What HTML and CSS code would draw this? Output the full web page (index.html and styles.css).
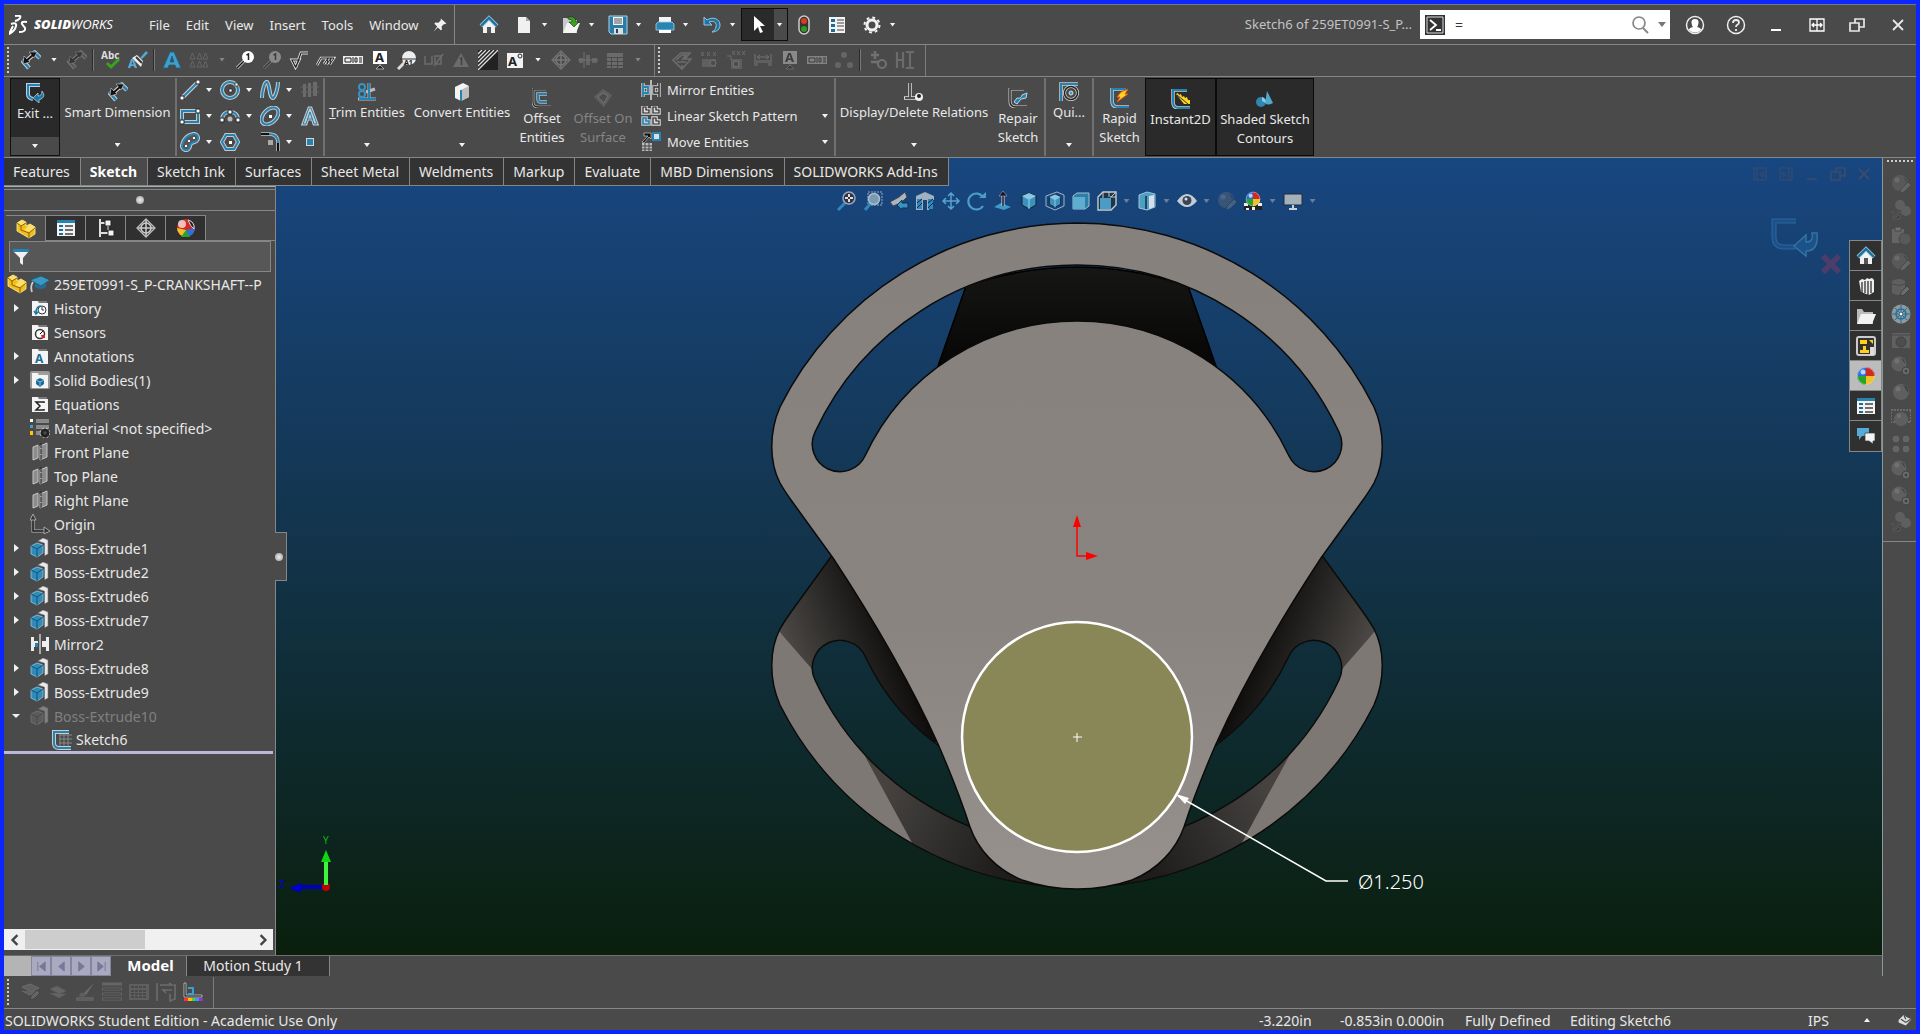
FILE: index.html
```html
<!DOCTYPE html>
<html lang="en">

<head>
    <meta charset="utf-8">
    <meta name="viewport" content="width=device-width, initial-scale=1.0">
    <title>SOLIDWORKS - Sketch6 of 259ET0991-S_P-CRANKSHAFT</title>
    <link rel="stylesheet" href="styles.css">
</head>

<body>
    <!-- icon sprite -->
    <svg class="sprite" aria-hidden="true">
        <symbol id="home" viewBox="0 0 20 20"><path d="M4 10v8h12v-8l-6-6z" fill="#f2f2f2"/><rect x="8" y="12" width="4" height="6" fill="#555"/><path d="M2 11l8-8 8 8" fill="none" stroke="#9ccbe2" stroke-width="4"/><path d="M2 11l8-8 8 8" fill="none" stroke="#1f7099" stroke-width="2.4"/></symbol>
        <symbol id="new" viewBox="0 0 20 20"><path d="M4 2h8l4 4v12H4z" fill="#f0f0f0"/><path d="M12 2v4h4z" fill="#a8a8a8"/></symbol>
        <symbol id="open" viewBox="0 0 20 20"><path d="M2 3h5l2 2h7v13H2z" fill="#c9c9c9"/><path d="M6 8h13l-4 10H2z" fill="#f4f4f4"/><path d="M7 2c5-1 8 1 8 5h3l-5 5-5-5h3c0-2-1-3-4-3z" fill="#36a51c" stroke="#222" stroke-width=".6"/></symbol>
        <symbol id="save" viewBox="0 0 20 20"><path d="M1 1h18v18H3l-2-2z" fill="#2a7ca8" stroke="#a5d1e6"/><path d="M5 2h10v8H5z" fill="#f3f3f3"/><path d="M6 4h8M6 6h8M6 8h8" stroke="#555"/><path d="M6 13h9v6H6z" fill="#ddd"/><path d="M8 14h2v4H8z" fill="#246"/></symbol>
        <symbol id="print" viewBox="0 0 20 20"><path d="M4 2h12v6H4zM4 13h12v4H4z" fill="#f4f4f4"/><path d="M1 9l2-2h14l2 2v6H1z" fill="#2a84b2" stroke="#a5d1e6" stroke-width=".8"/><path d="M4 15h12v3H4z" fill="#fff"/></symbol>
        <symbol id="undo" viewBox="0 0 20 20"><path d="M2 2v8h8L7 7c5-2 8 1 7 5-.3 2-2 4-4 5 5 0 8-3 8-7 0-6-7-9-13-5z" fill="#1f74a4" stroke="#94c6df"/></symbol>
        <symbol id="cursor" viewBox="0 0 20 20"><path d="M5 1v15l4-4 2 6 3-1-3-6h5z" fill="#fff"/></symbol>
        <symbol id="light" viewBox="0 0 20 20"><rect x="5" y="1" width="10" height="18" rx="5" fill="#333" stroke="#ccc" stroke-width="1.5"/><circle cx="10" cy="6" r="3" fill="#d93a20"/><circle cx="10" cy="14" r="3" fill="#2f9a1f"/></symbol>
        <symbol id="list" viewBox="0 0 20 20"><path d="M2 2h16v16H2z" fill="#f3f3f3"/><path d="M4 4h4v3H4zM4 9h4v3H4zM4 14h4v3H4z" fill="#1d6c98"/><path d="M10 5h7M10 8h7M10 11h7M10 15h7" stroke="#444"/></symbol>
        <symbol id="props" viewBox="0 0 20 20"><path d="M1 2h18v16H1z" fill="#f3f3f3"/><path d="M1 2h18v3H1z" fill="#2783b0"/><path d="M3 7h4v2H3zM3 11h4v2H3zM3 15h4v2H3z" fill="#1d6c98"/><path d="M9 8h8M9 12h8M9 16h8" stroke="#444" stroke-width="1.3"/></symbol>
        <symbol id="gear" viewBox="0 0 20 20"><circle cx="10" cy="10" r="5" fill="none" stroke="#f2f2f2" stroke-width="3"/><circle cx="10" cy="10" r="7.5" fill="none" stroke="#f2f2f2" stroke-width="2" stroke-dasharray="2.9 3"/></symbol>
        <symbol id="pin" viewBox="0 0 20 20"><path d="M11 2l7 6-2 1-1-.4-3 3.4.4 4-1.4.6-3.7-3.5L2 18l4.500-6L3 8.500 4 7l4 .2L11 4z" fill="#f0f0f0"/></symbol>
        <symbol id="dim" viewBox="0 0 20 20"><path d="M12 1l7 7M1 10l7 8" stroke="#ccc" stroke-width="4.500"/><path d="M12 1l7 7M1 10l7 8" stroke="#2583b4" stroke-width="2.500"/><path d="M4 12l9-8" stroke="#ddd" stroke-width="4"/><path d="M2 14l1-8 6 6zM16 2L8 2l5 6z" fill="#111" stroke="#ccc" stroke-width=".6"/><path d="M5 11l7-6" stroke="#111" stroke-width="2"/></symbol>
        <symbol id="spell" viewBox="0 0 20 20"><text x="0" y="9" font-size="10" font-weight="700" fill="#ddd">Abc</text><path d="M6 13l4 4 8-8" fill="none" stroke="#36a51c" stroke-width="3"/></symbol>
        <symbol id="brush" viewBox="0 0 20 20"><path d="M12 8l6-7 2 2-6 6z" fill="#55a5cc"/><path d="M4 8l5-3 6 6-2 6z" fill="#eee"/><path d="M8 7l6 6" stroke="#333" stroke-width="2"/><text x="0" y="18" font-size="13" font-weight="700" fill="#5ab0da">A</text></symbol>
        <symbol id="letter" viewBox="0 0 20 20"><path d="M1 18l7-16h4l7 16h-5l-1-3H7l-1 3zM8 12h4l-2-6z" fill="#3f9fcb" stroke="#1b5b7c" stroke-width=".7"/></symbol>
        <symbol id="letters" viewBox="0 0 20 20"><path d="M1 9l2.500-6L6 9zM8 9l2.500-6L13 9zM14 9l2.500-6L19 9zM1 17l2.500-6L6 17zM8 17l2.500-6L13 17zM14 17l2.500-6L19 17z" fill="none" stroke="#999"/></symbol>
        <symbol id="balloon" viewBox="0 0 20 20"><path d="M10 10l-8 8" stroke="#ddd" stroke-width="3"/><path d="M10 10l-8 8" stroke="#111" stroke-width="1.400"/><circle cx="13" cy="7" r="6" fill="#fff"/><path d="M11.500 5l2-1v6" fill="none" stroke="#222" stroke-width="1.500"/></symbol>
        <symbol id="surf" viewBox="0 0 20 20"><path d="M3 10h7l-3.500 7zM7 17l5-14h7" fill="none" stroke="#ddd" stroke-width="3"/><path d="M3 10h7l-3.500 7zM7 17l5-14h7" fill="none" stroke="#222" stroke-width="1.200"/></symbol>
        <symbol id="weld" viewBox="0 0 20 20"><path d="M1 15l4-7h13l-4 6 1-6-4 6 1-6-4 6" fill="none" stroke="#ddd" stroke-width="2.600"/><path d="M1 15l4-7h13l-4 6 1-6-4 6 1-6-4 6" fill="none" stroke="#222"/></symbol>
        <symbol id="gtol" viewBox="0 0 20 20"><path d="M0 6h20v8H0z" fill="#eee"/><path d="M2 8h6v4H2zM10 7v6M12 8h2v4h-2zM16 8h3M16 10h3M16 12h3" fill="none" stroke="#222"/></symbol>
        <symbol id="datum" viewBox="0 0 20 20"><path d="M3 1h14v13H3z" fill="#fff"/><text x="5" y="12" font-size="13" font-weight="700" fill="#222">A</text><path d="M10 14v2M6 19h8l-4-4z" fill="#222" stroke="#ccc" stroke-width=".7"/></symbol>
        <symbol id="dtarget" viewBox="0 0 20 20"><path d="M8 12l-7 7" stroke="#ddd" stroke-width="3"/><circle cx="12" cy="8" r="7" fill="#eee"/><path d="M3 9h17" stroke="#333"/><text x="7" y="15" font-size="7" font-weight="700" fill="#222">A1</text></symbol>
        <symbol id="hole" viewBox="0 0 20 20"><path d="M1 6v8h7V6M11 6l6 0v8h-6zM10 16l9-12" fill="none" stroke="#aaa" stroke-width="1.500"/></symbol>
        <symbol id="tri" viewBox="0 0 20 20"><path d="M10 3l8 14H2z" fill="#aaa"/><path d="M9 9l1.500-1v7" fill="none" stroke="#333" stroke-width="1.500"/></symbol>
        <symbol id="hatch" viewBox="0 0 20 20"><path d="M0 0h20v20H0z" fill="#222"/><path d="M0 4l4-4M0 8l8-8M0 12L12 0M0 16L16 0M0 20L20 0" stroke="#ddd" stroke-width="1.300"/></symbol>
        <symbol id="block" viewBox="0 0 20 20"><path d="M2 3h16v15H2z" fill="#f3f3f3"/><text x="3" y="16" font-size="13" font-weight="700" fill="#222">A</text><circle cx="15" cy="6" r="2" fill="none" stroke="#222"/></symbol>
        <symbol id="target" viewBox="0 0 20 20"><path d="M10 1l9 9-9 9-9-9z" fill="none" stroke="#bbb" stroke-width="1.300"/><circle cx="10" cy="10" r="5" fill="none" stroke="#ccc" stroke-width="1.600"/><path d="M10 2v16M2 10h16" stroke="#ccc" stroke-width="1.500"/></symbol>
        <symbol id="cline" viewBox="0 0 20 20"><path d="M1 8h4v5H1zM8 5h4v10H8zM14 8h5v5h-5z" fill="#999"/><path d="M0 10h20M6 2v16" stroke="#bbb"/></symbol>
        <symbol id="table" viewBox="0 0 20 20"><path d="M2 3h16v4H2zM2 8h4v3H2zM7 8h5v3H7zM13 8h5v3h-5zM2 12h4v3H2zM7 12h5v3H7zM13 12h5v3h-5zM2 16h4v2H2zM7 16h5v2H7zM13 16h5v2h-5z" fill="#aaa"/></symbol>
        <symbol id="flagd" viewBox="0 0 20 20"><path d="M1 10l8-7h9l-5 6h6l-9 10zM4 10l6-5h4l-4 5M5 12h9M10 15v3" fill="none" stroke="#aaa" stroke-width="1.600"/></symbol>
        <symbol id="sizebox" viewBox="0 0 20 20"><path d="M2 2l3 4M5 2L2 6M8 2l3 4M11 2L8 6M14 2l3 4M17 2l-3 4" stroke="#aaa"/><path d="M3 9h14v8H3z" fill="#888"/><circle cx="14" cy="13" r="3" fill="#555" stroke="#bbb"/></symbol>
        <symbol id="sizehole" viewBox="0 0 20 20"><path d="M6 1l3 4M9 1L6 5M11 1l3 4M14 1l-3 4M16 1l3 4M19 1l-3 4" stroke="#aaa"/><path d="M5 9h11v10H5z" fill="#888"/><circle cx="10" cy="14" r="3" fill="#555" stroke="#ccc"/><path d="M1 6h4v4" fill="none" stroke="#aaa"/></symbol>
        <symbol id="between" viewBox="0 0 20 20"><path d="M1 4v12h4v-3h10v3h4V4h-2v6H3V4z" fill="#888"/><path d="M5 7h10M7 5L4 7l3 2M13 5l3 2-3 2" fill="none" stroke="#bbb"/></symbol>
        <symbol id="dots" viewBox="0 0 20 20"><g fill="#999"><circle cx="10" cy="5" r="3"/><circle cx="4" cy="15" r="3"/><circle cx="16" cy="15" r="3"/></g></symbol>
        <symbol id="plusm" viewBox="0 0 20 20"><path d="M7 1v8M3 5h8M3 12h8" stroke="#bbb" stroke-width="2.500"/><circle cx="14" cy="14" r="4" fill="none" stroke="#bbb" stroke-width="2"/></symbol>
        <symbol id="hi" viewBox="0 0 20 20"><path d="M2 2v16M8 2v16M2 10h6M11 2h8M11 18h8M15 2v16" stroke="#aaa" stroke-width="2.200"/></symbol>
        <symbol id="exit" viewBox="0 0 20 20"><path d="M15 2H3v9q0 4 5 5" fill="none" stroke="#bfd3de" stroke-width="4"/><path d="M15 2H3v9q0 4 5 5" fill="none" stroke="#2583b4" stroke-width="2"/><path d="M8 15l5-5 0 3q4 0 4-5 5 6-3 9l0 3z" fill="#1e77a6" stroke="#a9c9d9" stroke-width=".8"/></symbol>
        <symbol id="line" viewBox="0 0 20 20"><path d="M2 18L18 2" stroke="#d0d0d0" stroke-width="4"/><path d="M2 18L18 2" stroke="#2583b4" stroke-width="2"/><path d="M0 16h4v4H0zM16 0h4v4h-4z" fill="#fff" stroke="#222"/></symbol>
        <symbol id="circle" viewBox="0 0 20 20"><circle cx="10" cy="10" r="8" fill="none" stroke="#c8c8c8" stroke-width="4"/><circle cx="10" cy="10" r="8" fill="none" stroke="#2583b4" stroke-width="2"/><path d="M9 9h3v3H9zM15 3h3v3h-3z" fill="#fff" stroke="#222" stroke-width=".7"/></symbol>
        <symbol id="spline" viewBox="0 0 20 20"><path d="M2 18C2 10 5 1 7 2c3 2 2 16 6 16 2-1 5-9 5-16" fill="none" stroke="#c8c8c8" stroke-width="4"/><path d="M2 18C2 10 5 1 7 2c3 2 2 16 6 16 2-1 5-9 5-16" fill="none" stroke="#2583b4" stroke-width="2"/></symbol>
        <symbol id="net" viewBox="0 0 20 20"><path d="M3 4h3v13H3zM8 3h3v14H8zM13 2h4v14h-4z" fill="#aaa"/><path d="M1 7h18M1 12h18" stroke="#999"/></symbol>
        <symbol id="rect" viewBox="0 0 20 20"><path d="M2 5h16v11H2z" fill="none" stroke="#c8c8c8" stroke-width="4"/><path d="M2 5h16v11H2z" fill="none" stroke="#2583b4" stroke-width="2"/><path d="M0 14h4v4H0zM16 3h4v4h-4z" fill="#fff" stroke="#222"/></symbol>
        <symbol id="arc" viewBox="0 0 20 20"><path d="M2 14C2 3 18 3 18 14" fill="none" stroke="#c8c8c8" stroke-width="4"/><path d="M2 14C2 3 18 3 18 14" fill="none" stroke="#2583b4" stroke-width="2"/><path d="M0 12h4v4H0zM16 12h4v4h-4zM8 4h4v4H8z" fill="#fff" stroke="#222"/><circle cx="10" cy="13" r="2.500" fill="#bbb"/></symbol>
        <symbol id="ellipse" viewBox="0 0 20 20"><g transform="rotate(-45 10 10)"><ellipse cx="10" cy="10" rx="10" ry="6.500" fill="none" stroke="#c8c8c8" stroke-width="4"/><ellipse cx="10" cy="10" rx="10" ry="6.500" fill="none" stroke="#2583b4" stroke-width="2"/></g><path d="M9 9h3v3H9z" fill="#fff"/></symbol>
        <symbol id="text" viewBox="0 0 20 20"><path d="M3 18h3L10 6l4 12h3L11 2H9zM7 13h6" fill="none" stroke="#c8c8c8" stroke-width="3"/><path d="M3 18h3L10 6l4 12h3L11 2H9zM7 13h6" fill="none" stroke="#2583b4"/></symbol>
        <symbol id="slot" viewBox="0 0 20 20"><path d="M6 14C7 9 9 7 14 6" fill="none" stroke="#c8c8c8" stroke-width="12" stroke-linecap="round"/><path d="M6 14C7 9 9 7 14 6" fill="none" stroke="#2583b4" stroke-width="10" stroke-linecap="round"/><path d="M6 14C7 9 9 7 14 6" fill="none" stroke="#555" stroke-width="6" stroke-linecap="round"/><path d="M5 13h2v2H5zM8 8h2v2H8zM13 5h2v2h-2z" fill="#fff"/></symbol>
        <symbol id="poly" viewBox="0 0 20 20"><path d="M6 3h8l4 7-4 7H6l-4-7z" fill="none" stroke="#c8c8c8" stroke-width="4"/><path d="M6 3h8l4 7-4 7H6l-4-7z" fill="none" stroke="#2583b4" stroke-width="2"/><path d="M9 9h3v3H9z" fill="#fff"/></symbol>
        <symbol id="fillet" viewBox="0 0 20 20"><path d="M1 2h8q9 0 9 9v8" fill="none" stroke="#c8c8c8" stroke-width="3.500"/><path d="M9 2q9 0 9 9" fill="none" stroke="#2583b4" stroke-width="2"/><path d="M1 2h8M18 11v8" stroke="#111" stroke-width="2"/><path d="M8 8h5v5H8z" fill="#aaa"/></symbol>
        <symbol id="point" viewBox="0 0 20 20"><path d="M6 6h8v8H6z" fill="#d6d6d6"/><path d="M7 7h6v6H7z" fill="#2583b4"/></symbol>
        <symbol id="trim" viewBox="0 0 20 20"><path d="M12 1v15M1 17h18M9 10l9-3" stroke="#bbb" stroke-width="3"/><path d="M12 9v8h7" stroke="#2583b4" fill="none" stroke-width="2"/><path d="M12 1v8M2 17h9" stroke="#2583b4" stroke-width="2"/><circle cx="5" cy="5" r="3" fill="none" stroke="#3793c2" stroke-width="2"/><circle cx="5" cy="12" r="3" fill="none" stroke="#3793c2" stroke-width="2"/></symbol>
        <symbol id="convert" viewBox="0 0 20 20"><path d="M3 5l8-4 6 3v11l-8 4-6-3z" fill="#f3f3f3"/><path d="M9 8v11l8-4V4z" fill="#bdbdbd"/><path d="M9 8v11" stroke="#2583b4" stroke-width="2"/></symbol>
        <symbol id="offset" viewBox="0 0 20 20"><path d="M14 1H1v13q0 5 5 5h13" fill="none" stroke="#ccc" stroke-width="2.500"/><path d="M14 1H1v13q0 5 5 5h13" fill="none" stroke="#222" stroke-width="1.300"/><path d="M15 6H6v5q0 3 3 3h6" fill="none" stroke="#bbb" stroke-width="3.500"/><path d="M15 6H6v5q0 3 3 3h6" fill="none" stroke="#2583b4" stroke-width="2"/></symbol>
        <symbol id="offsurf" viewBox="0 0 20 20"><path d="M10 1l9 6-8 12L1 9z" fill="#888"/><path d="M10 5l5 3-4 7-6-6z" fill="#555" stroke="#bbb"/></symbol>
        <symbol id="mirror" viewBox="0 0 20 20"><path d="M2 3v14M2 7h5v6H2M18 3v14M18 7h-5v6h5" fill="none" stroke="#ccc" stroke-width="3.500"/><path d="M2 3v14M2 7h5v6H2" fill="none" stroke="#2583b4" stroke-width="1.800"/><path d="M18 3v14M18 7h-5v6h5" fill="none" stroke="#333" stroke-width="1.500"/><path d="M10 0v20" stroke="#ddd" stroke-width="1.500"/></symbol>
        <symbol id="pattern" viewBox="0 0 20 20"><g fill="none" stroke="#ddd" stroke-width="3.500"><path d="M2 1v6h6V4H5V1zM12 1v6h6V4h-3V1zM12 12v6h6v-3h-3v-3z"/></g><g fill="none" stroke="#222" stroke-width="1.200"><path d="M2 1v6h6V4H5V1zM12 1v6h6V4h-3V1zM12 12v6h6v-3h-3v-3z"/></g><path d="M2 12v6h6v-3H5v-3z" fill="none" stroke="#ccc" stroke-width="3.500"/><path d="M2 12v6h6v-3H5v-3z" fill="none" stroke="#2583b4" stroke-width="1.600"/></symbol>
        <symbol id="move" viewBox="0 0 20 20"><path d="M1 10l6-6H3V1h7v6L8 5l-5 6z" fill="#111" stroke="#ccc" stroke-width=".7"/><path d="M12 1h7v7h-7z" fill="#ddd" stroke="#2583b4" stroke-width="2"/><path d="M1 11h10v8H1z" fill="#bbb"/><path d="M1 14h10M1 17h10M4 11v8M8 11v8" stroke="#444"/></symbol>
        <symbol id="relations" viewBox="0 0 20 20"><path d="M6 1v14M0 16h12" stroke="#ddd" stroke-width="3.500"/><path d="M6 1v14M1 16h10" stroke="#222" stroke-width="1.500"/><circle cx="15" cy="15" r="4" fill="#eee"/><circle cx="15" cy="14" r="2" fill="#222"/></symbol>
        <symbol id="repair" viewBox="0 0 20 20"><path d="M16 1H2v12q0 6 6 6h11" fill="none" stroke="#ccc" stroke-width="3"/><path d="M16 1H2v12q0 6 6 6h11" fill="none" stroke="#222" stroke-width="1.400"/><path d="M6 14l3-4q4 1 5-3l5-2-1 5-5 1-4 5z" fill="#2583b4" stroke="#bcd8e6"/></symbol>
        <symbol id="snap" viewBox="0 0 20 20"><path d="M2 19V2h17" fill="none" stroke="#ccc" stroke-width="3.500"/><path d="M2 19V2h17" fill="none" stroke="#2583b4" stroke-width="2"/><circle cx="12" cy="11" r="6.500" fill="none" stroke="#ddd" stroke-width="3"/><circle cx="12" cy="11" r="6.500" fill="none" stroke="#222" stroke-width="1.500"/><circle cx="12" cy="11" r="2" fill="#3a9dcc" stroke="#ddd"/></symbol>
        <symbol id="rapid" viewBox="0 0 20 20"><path d="M16 1H2v12q0 6 6 6h11" fill="none" stroke="#ccc" stroke-width="3.500"/><path d="M16 1H2v12q0 6 6 6h11" fill="none" stroke="#2583b4" stroke-width="2"/><path d="M11 4l7-3-3 5 3 0-11 8 3-5-3 0z" fill="#ffd61f" stroke="#e0531a"/></symbol>
        <symbol id="instant" viewBox="0 0 20 20"><path d="M16 1H2v12q0 6 6 6h11" fill="none" stroke="#ccc" stroke-width="3.500"/><path d="M16 1H2v12q0 6 6 6h11" fill="none" stroke="#2583b4" stroke-width="2"/><path d="M5 5l2-1 1 2 2-1 1 3 2-1 1 2 2-1 1 3 2 0v4H13z" fill="#ffd61f"/><path d="M6 6l11 9" stroke="#333"/></symbol>
        <symbol id="shaded" viewBox="0 0 20 20"><path d="M12 2l6 12q-5 3-8 0z" fill="#4fa9cf"/><circle cx="6" cy="13" r="5" fill="#2f86b0"/><path d="M7 8q4 1 4 6l-4-2z" fill="#8fcbe6"/></symbol>
        <symbol id="part" viewBox="0 0 20 20"><path d="M1 4l5-3 4 2v4l4-2 5 3v7l-6 4L1 12z" fill="#f2bd1b" stroke="#fff0a8" stroke-width=".8"/><path d="M1 4l4 3 5-3-4-3zM8 11l5 2 6-4-5-4z" fill="#ffdf6a"/><path d="M1 4l4 3v4l8 3v5M5 7l5-3M13 14l6-5" fill="none" stroke="#8b6500"/></symbol>
        <symbol id="cfg" viewBox="0 0 20 20"><path d="M4 1v18M4 5h6M4 15h8" fill="none" stroke="#ddd" stroke-width="2"/><path d="M9 2h6v6H9zM12 12h6v6h-6z" fill="#f3f3f3" stroke="#222"/><path d="M12 8v4" stroke="#ddd"/></symbol>
        <symbol id="ball" viewBox="0 0 20 20"><circle cx="10" cy="10" r="9" fill="#2b6fe0"/><path d="M10 10V1a9 9 0 0 1 9 9z" fill="#d22a22"/><path d="M10 10h9a9 9 0 0 1-9 9z" fill="#efc22a"/><path d="M10 10v9a9 9 0 0 1-9-9z" fill="#2ba32b"/><circle cx="7" cy="6" r="2.500" fill="#fff" opacity=".7"/><circle cx="10" cy="10" r="8.600" fill="none" stroke="#fff" opacity=".4"/></symbol>
        <symbol id="ball2" viewBox="0 0 20 20"><circle cx="10" cy="10" r="9" fill="#d22a22"/><path d="M10 12l9-2a9 9 0 0 1-9 9z" fill="#2b6fe0"/><path d="M10 12v7a9 9 0 0 1-9-9z" fill="#efc22a"/><path d="M10 12L5 19l9 0z" fill="#2ba32b"/><circle cx="6" cy="6" r="4" fill="#fff" opacity=".7"/><path d="M12 2q7 2 6 9-4-3-6-9z" fill="#222" stroke="#ddd"/></symbol>
        <symbol id="funnel" viewBox="0 0 20 20"><path d="M2 4h16l-6 7v7l-3-2v-5z" fill="#f0f0f0"/><path d="M2 2h16v3H2z" fill="#2583b4"/></symbol>
        <symbol id="cap" viewBox="0 0 20 20"><path d="M0 6l11-4 9 4-9 6z" fill="#3c97c3" stroke="#1b5473" stroke-width=".8"/><path d="M5 9v4q5 4 11 0V9l-5 3z" fill="#246d92"/><path d="M3 8q-3 4-1 10" fill="none" stroke="#ccc" stroke-width="1.800"/></symbol>
        <symbol id="folder" viewBox="0 0 20 20"><path d="M2 3h6l1 2h9v13H2z" fill="#f4f4f4"/><path d="M8 4h9" stroke="#aaa"/></symbol>
        <symbol id="history" viewBox="0 0 20 20"><use href="#folder"/><circle cx="12" cy="12" r="4" fill="#fff" stroke="#333"/><path d="M12 9v3h2" fill="none" stroke="#333"/><path d="M4 13l2 3 3-3M6 15c0-5 2-7 5-7" fill="none" stroke="#1b76a5" stroke-width="1.500"/></symbol>
        <symbol id="sensor" viewBox="0 0 20 20"><use href="#folder"/><circle cx="10" cy="12" r="4.500" fill="#fff" stroke="#333" stroke-width="1.500"/><path d="M10 12l3-3" stroke="#111"/><path d="M11 13h4v3h-3z" fill="#d22"/></symbol>
        <symbol id="anno" viewBox="0 0 20 20"><use href="#folder"/><text x="5" y="17" font-size="12" font-weight="700" fill="#1b6c98">A</text></symbol>
        <symbol id="bodies" viewBox="0 0 20 20"><rect x="0" y="1" width="20" height="18" rx="2" fill="#999"/><use href="#folder"/><path d="M6 10l4-2 4 2v4l-4 3-4-3z" fill="#1b6c98"/><path d="M6 10l4 2 4-2M10 12v4" fill="none" stroke="#9cd0e8" stroke-width=".8"/></symbol>
        <symbol id="eq" viewBox="0 0 20 20"><use href="#folder"/><path d="M14 9V8H6l4 4-4 4h8v-1" fill="none" stroke="#222" stroke-width="1.500"/></symbol>
        <symbol id="material" viewBox="0 0 20 20"><path d="M6 3h13M6 9h13M6 15h6" stroke="#ccc" stroke-width="3"/><path d="M6 3h13M6 9h13M6 15h6" stroke="#444"/><path d="M0 1h3v3H0z" fill="#fff"/><path d="M0 7h3v3H0z" fill="#3aa0d0"/><path d="M0 13h3v4H0z" fill="#ffc800"/><circle cx="15" cy="15" r="3" fill="none" stroke="#222" stroke-width="2.500"/><circle cx="15" cy="15" r="5" fill="none" stroke="#ccc" stroke-dasharray="2 2"/></symbol>
        <symbol id="plane" viewBox="0 0 20 20"><path d="M3 5l5-2v13l-5 2zM10 4l7-3v14l-7 3z" fill="#8c8c8c" stroke="#c4c4c4"/><path d="M11 1v18" stroke="#222" stroke-dasharray="5 1"/></symbol>
        <symbol id="origin" viewBox="0 0 20 20"><path d="M3 2v15h15" fill="none" stroke="#bbb" stroke-width="3"/><path d="M3 4v13h13" fill="none" stroke="#111" stroke-width="1.500"/><path d="M0 6l3-6 3 6zM14 13l6 4-6 3z" fill="#333" stroke="#bbb" stroke-width=".8"/></symbol>
        <symbol id="extrude" viewBox="0 0 20 20"><path d="M8 3l5-3 5 2v14l-4 2V5z" fill="#e9e9e9" stroke="#777" stroke-width=".6"/><path d="M14 5v13" stroke="#333"/><path d="M1 8l6-3 6 2v8l-6 4-6-3z" fill="#2f8cba" stroke="#8ec9e4" stroke-width=".8"/><path d="M1 8l6 3 6-4M7 11v8" fill="none" stroke="#155172"/></symbol>
        <symbol id="mirrorf" viewBox="0 0 20 20"><path d="M1 3h3v4h4v6H4v4H1zM19 3h-3v4h-4v6h4v4h3z" fill="#eee"/><path d="M5 9h3v4H5z" fill="#2583b4"/><path d="M10 0v20" stroke="#aaa" stroke-width="2"/></symbol>
        <symbol id="sketch" viewBox="0 0 20 20"><path d="M7 5h13M7 9h13M7 13h13M8 3v13M12 3v13M16 3v13" stroke="#888"/><path d="M17 2H2v11q0 5 5 5h12" fill="none" stroke="#ccc" stroke-width="4"/><path d="M17 2H2v11q0 5 5 5h12" fill="none" stroke="#2583b4" stroke-width="2"/></symbol>
        <symbol id="zoomfit" viewBox="0 0 20 20"><path d="M9 11l-8 8" stroke="#2f86c0" stroke-width="3"/><circle cx="12" cy="7" r="6" fill="#334" stroke="#9ab" stroke-width="1.500"/><path d="M12 3v8M8 7h8" stroke="#ddd" stroke-width="2" stroke-dasharray="3 2"/></symbol>
        <symbol id="zoomarea" viewBox="0 0 20 20"><path d="M5 1h14v13H5z" fill="none" stroke="#9ab" stroke-dasharray="2 1"/><path d="M8 12l-6 7" stroke="#2f86c0" stroke-width="3"/><circle cx="11" cy="8" r="5.500" fill="#7a9ab4" stroke="#aabccc" stroke-width="1.500"/></symbol>
        <symbol id="prev" viewBox="0 0 20 20"><path d="M1 11l9-5 6-5 2 5-6 6-8 3z" fill="#a9b4be" stroke="#445"/><path d="M8 14l5-5v3h6v5h-6v2z" fill="#3593c5" stroke="#134"/></symbol>
        <symbol id="section" viewBox="0 0 20 20"><path d="M1 5l9-4 9 4v4h-5v10h-2V9H8v10H1z" fill="#9fb0be"/><path d="M2 8h5v10H2zM13 8h5v10h-5z" fill="#2d8abb"/><path d="M2 12l5-4M2 17l5-5M13 12l5-4M13 17l5-5" stroke="#124"/></symbol>
        <symbol id="pan" viewBox="0 0 20 20"><path d="M10 2v16M2 10h16M7 5l3-3 3 3M7 15l3 3 3-3M5 7l-3 3 3 3M15 7l3 3-3 3" fill="none" stroke="#56a4d0" stroke-width="1.500"/></symbol>
        <symbol id="rotate" viewBox="0 0 20 20"><path d="M16 6a8 8 0 1 0 0 9" fill="none" stroke="#4c9cc8" stroke-width="2.200"/><path d="M12 7h7V1z" fill="#4c9cc8"/></symbol>
        <symbol id="normal" viewBox="0 0 20 20"><path d="M1 16l7-4 10 4-7 3z" fill="#3e9bc9"/><path d="M10 3v12" stroke="#dde" stroke-width="3"/><path d="M10 3v12" stroke="#112" stroke-width="1.500"/><path d="M6 5l4-5 4 5z" fill="#112" stroke="#aab" stroke-width=".6"/></symbol>
        <symbol id="cube" viewBox="0 0 20 20"><path d="M3 5l7-3 7 3v9l-7 4-7-4z" fill="#3d92bd" stroke="#123"/><path d="M3 5l7 4 7-4-7-3z" fill="#8bc6e2"/><path d="M10 9v9" stroke="#9fd2ea"/></symbol>
        <symbol id="cubew" viewBox="0 0 20 20"><path d="M1 5l11-4 7 3v11l-9 4-9-4z" fill="none" stroke="#9cb4c8"/><use href="#cube" x="2" y="2" width="16" height="16"/></symbol>
        <symbol id="cubef" viewBox="0 0 20 20"><path d="M2 5l4-3h12v13l-4 3H2z" fill="#2f7ea8" stroke="#9fc4d8"/><path d="M2 6h12v12H2z" fill="#5faed2"/></symbol>
        <symbol id="cubex" viewBox="0 0 20 20"><path d="M1 6l5-5h13v13l-5 5H1z" fill="#234" stroke="#c0ccd6" stroke-width="1.400"/><path d="M6 1v6M19 6h-6M12 1v5M14 6l5-5" stroke="#c0ccd6"/><path d="M3 7h11v11H3z" fill="#4a9cc4"/></symbol>
        <symbol id="display" viewBox="0 0 20 20"><path d="M2 4l8-3 8 2v13l-8 3-8-2z" fill="#4f9ec4" stroke="#9fc4d8"/><path d="M12 5l5-1v12l-5 2z" fill="#d7e0e6"/><path d="M9 5v13" stroke="#1c4a68" stroke-width="2"/></symbol>
        <symbol id="eye" viewBox="0 0 20 20"><path d="M0 10q10-14 20 0-10 12-20 0z" fill="#c4cdd6"/><circle cx="10" cy="9.500" r="4.500" fill="#3b4654"/><circle cx="9" cy="8" r="1.500" fill="#dde"/></symbol>
        <symbol id="ballpen" viewBox="0 0 20 20"><circle cx="9" cy="9" r="8" fill="#777"/><circle cx="6" cy="6" r="2.500" fill="#aaa"/><path d="M12 3q4 1 4 6z" fill="#444"/><path d="M9 19l1-4 7-7 3 3-7 7z" fill="#999" stroke="#444"/></symbol>
        <symbol id="scene" viewBox="0 0 20 20"><path d="M1 12h18v7H1z" fill="#222"/><path d="M1 12h4v3H1zM9 16h3v3H9zM15 12h4v3h-4zM3 17h3v2H3z" fill="#eee"/><use href="#ball" x="2" y="0" width="16" height="16"/></symbol>
        <symbol id="monitor" viewBox="0 0 20 20"><path d="M1 3h18v11H1z" fill="#a4b0ba" stroke="#222b38"/><path d="M9 14h2v3h3v2H6v-2h3z" fill="#c8d0d8"/></symbol>
        <symbol id="books" viewBox="0 0 20 20"><path d="M3 5l3-2 3 1 2-2 2 1 3-1 2 2v12l-5 3-8-3z" fill="#eee"/><path d="M6 6v11M9 5v12M12 5v14M15 5v12" stroke="#222" stroke-width="1.200"/></symbol>
        <symbol id="dir" viewBox="0 0 20 20"><path d="M1 3h5l2 3h9v12H1z" fill="#bbb"/><path d="M5 8h15l-4 10H1z" fill="#f1f1f1"/></symbol>
        <symbol id="palette" viewBox="0 0 20 20"><rect x="1" y="1" width="18" height="18" rx="2" fill="#333" stroke="#ccc" stroke-width="2"/><path d="M4 4h7v4H4zM13 4h4v4zM7 10h3v4h3v3H4v-3h3z" fill="#ffd11a"/><path d="M14 11h4v8h-4z" fill="#ddd"/></symbol>
        <symbol id="forum" viewBox="0 0 20 20"><path d="M1 2h12v8H6l-3 4v-4H1z" fill="#56acd6"/><path d="M9 7h10v8h-2v3l-4-3H9z" fill="#f3f3f3" stroke="#333" stroke-width=".7"/></symbol>
        <symbol id="globe" viewBox="0 0 20 20"><circle cx="10" cy="10" r="9.500" fill="#8c9a9f"/><circle cx="10" cy="10" r="5" fill="none" stroke="#256f98" stroke-width="1.500"/><path d="M10 1v18M1 10h18M4 4l12 12M16 4L4 16" stroke="#256f98"/><path d="M9 9h2v2H9z" fill="#fff"/></symbol>
        <symbol id="camera" viewBox="0 0 20 20"><path d="M1 3h18v15H1z" fill="#8a8a8a"/><path d="M1 5h18" stroke="#444"/><circle cx="10" cy="12" r="5" fill="#555" stroke="#333"/></symbol>
        <symbol id="ballgear" viewBox="0 0 20 20"><circle cx="8" cy="8" r="7.500" fill="#888"/><circle cx="6" cy="5" r="2.500" fill="#bbb"/><path d="M10 2q4 1 4 6z" fill="#333"/><circle cx="15" cy="15" r="4" fill="#aaa" stroke="#333"/><circle cx="15" cy="15" r="1.500" fill="#333"/></symbol>
        <symbol id="balls" viewBox="0 0 20 20"><g fill="#999" stroke="#444"><circle cx="5" cy="5" r="4"/><circle cx="15" cy="5" r="4"/><circle cx="5" cy="15" r="4"/><circle cx="15" cy="15" r="4"/></g></symbol>
        <symbol id="ballsarrow" viewBox="0 0 20 20"><g fill="#888"><circle cx="9" cy="5" r="5"/><circle cx="15" cy="11" r="5"/></g><path d="M1 11l6 5v-4h2v7H2v-2h4l-5-4z" fill="#333" stroke="#999" stroke-width=".6"/></symbol>
        <symbol id="paste" viewBox="0 0 20 20"><path d="M1 3h12v14H1z" fill="#999"/><path d="M4 1h6v4H4z" fill="#bbb" stroke="#444"/><circle cx="14" cy="13" r="6" fill="#777" stroke="#444"/></symbol>
        <symbol id="barrel" viewBox="0 0 20 20"><path d="M1 3q7-4 13 0v12q-6 4-13 0z" fill="#888"/><path d="M1 6q7 3 13 0" fill="none" stroke="#444"/><path d="M9 18l1-4 6-6 3 3-6 6z" fill="#aaa" stroke="#333"/></symbol>
        <symbol id="film" viewBox="0 0 20 20"><path d="M0 2h20v12H0z" fill="none" stroke="#aaa" stroke-width="2" stroke-dasharray="2 1"/><circle cx="10" cy="11" r="7" fill="#888"/><circle cx="8" cy="8" r="2" fill="#bbb"/></symbol>
        <symbol id="ballplain" viewBox="0 0 20 20"><circle cx="10" cy="10" r="8" fill="#888"/><circle cx="7" cy="7" r="2.500" fill="#bbb"/><path d="M12 3q6 1 5 8z" fill="#333"/></symbol>
        <symbol id="layers" viewBox="0 0 20 20"><path d="M1 5l8-3 9 4-8 4zM1 9l8 4 8-4" fill="#888" stroke="#aaa"/><path d="M9 18l1-4 6-6 3 3-6 6z" fill="#999" stroke="#333"/></symbol>
        <symbol id="stack" viewBox="0 0 20 20"><path d="M2 7l7-3 9 5-7 3zM2 11l9 5 7-4" fill="#999" stroke="#777"/></symbol>
        <symbol id="paint" viewBox="0 0 20 20"><path d="M19 1L9 11l2 2z" fill="#aaa"/><path d="M4 14q1-4 5-3l2 2q-2 3-7 1z" fill="#888"/><rect x="1" y="15" width="18" height="4" rx="1" fill="#888"/></symbol>
        <symbol id="lines" viewBox="0 0 20 20"><path d="M0 2h20M0 7h20M0 12h20M0 17h20" stroke="#999" stroke-width="3"/><path d="M1 7h18M1 12h18M1 17h18" stroke="#222"/></symbol>
        <symbol id="dash" viewBox="0 0 20 20"><path d="M0 2h20v16H0z" fill="#888"/><path d="M2 5h16M2 9h16M2 12h16M2 15h16" stroke="#333" stroke-width="1.300" stroke-dasharray="3 1"/></symbol>
        <symbol id="swap" viewBox="0 0 20 20"><path d="M1 1v18M4 3h12l-3-2M16 8H7l3 3M19 2v15l-5 2v-7" fill="none" stroke="#aaa" stroke-width="1.600"/></symbol>
        <symbol id="ruler" viewBox="0 0 20 20"><path d="M1 1h2v12h16v2H1z" fill="#222" stroke="#ccc" stroke-width=".8"/><path d="M5 6h5v6H5" fill="none" stroke="#3aa0d0" stroke-width="2"/><path d="M1 16h4v3H1z" fill="#f33"/><path d="M5 16h4v3H5z" fill="#fb0"/><path d="M9 16h3v3H9z" fill="#5c3"/><path d="M12 16h4v3h-4z" fill="#39f"/><path d="M16 16h4v3h-4z" fill="#93c"/></symbol>
        <symbol id="user" viewBox="0 0 20 20"><circle cx="10" cy="10" r="8.500" fill="none" stroke="#eee" stroke-width="1.500"/><path d="M10 4q4 0 3.500 4-.5 3-1.500 4 4 1 4 3-6 5-12 0 0-2 4-3-1-1-1.500-4Q6 4 10 4z" fill="#fff"/></symbol>
        <symbol id="help" viewBox="0 0 20 20"><circle cx="10" cy="10" r="8.500" fill="none" stroke="#eee" stroke-width="1.500"/><path d="M7 8q0-3 3-3t3 2.500q0 1.500-2 2.500-1 .6-1 2M10 14v2" fill="none" stroke="#eee" stroke-width="1.800"/></symbol>
        <symbol id="min" viewBox="0 0 20 20"><path d="M5 14h10v2H5z" fill="#fff"/></symbol>
        <symbol id="span" viewBox="0 0 20 20"><path d="M3 4h14v12H3zM10 4v12M5 10h10M7 8l-2 2 2 2M13 8l2 2-2 2" fill="none" stroke="#fff" stroke-width="1.300"/></symbol>
        <symbol id="restore" viewBox="0 0 20 20"><path d="M3 8h9v8H3zM8 8V4h9v8h-5" fill="none" stroke="currentColor" stroke-width="1.700"/></symbol>
        <symbol id="close" viewBox="0 0 20 20"><path d="M5 5l10 10M15 5L5 15" stroke="currentColor" stroke-width="1.800"/></symbol>
        <symbol id="dockl" viewBox="0 0 20 20"><path d="M4 4h12v12H4zM7 4v12M13 8v5l-3-2.500z" fill="none" stroke="currentColor"/></symbol>
        <symbol id="dockr" viewBox="0 0 20 20"><path d="M4 4h12v12H4zM13 4v12M7 8v5l3-2.500z" fill="none" stroke="currentColor"/></symbol>
        <symbol id="prompt" viewBox="0 0 20 20"><path d="M1 1h18v18H1z" fill="#333" stroke="#333" stroke-width="2"/><path d="M2 2h16v16H2z" fill="none" stroke="#ddd"/><path d="M5 5l6 5-6 5M11 15h5" fill="none" stroke="#fff" stroke-width="1.800"/></symbol>
        <symbol id="glass" viewBox="0 0 20 20"><circle cx="9" cy="8" r="6" fill="none" stroke="#888" stroke-width="1.700"/><path d="M13 13l5 5" stroke="#888" stroke-width="2"/></symbol>
        <symbol id="tag" viewBox="0 0 20 20"><path d="M2 10l6-6 5 3 5 2-7 8-9-4z" fill="#ddd"/><path d="M5 9l6 4 6-4M9 5l2 4" fill="none" stroke="#444" stroke-width="1.500"/></symbol>
    </svg>

    <div class="app">
        <header class="titlebar">
            <div class="logo">
                <svg class="ds" viewBox="0 0 20 20"><path d="M6 1q7-1 5 2-1 2-5 3M2 9q6-2 5 2-1 5-7 8l4-8M18 7q-6-1-5 2l3 4q1 4-6 4" fill="none" stroke="#fff" stroke-width="2"/></svg>
                <span><b>SOLID</b>WORKS</span>
            </div>
            <nav class="menu">
                <button>File</button><button>Edit</button><button>View</button><button>Insert</button><button>Tools</button><button>Window</button>
            </nav>
            <button class="pin" aria-label="Pin menu"><svg class="ic sm"><use href="#pin"/></svg></button>
            <div class="quick">
                <button class="solo"><svg class="ic"><use href="#home"/></svg></button>
                <button class="split"><svg class="ic"><use href="#new"/></svg><i class="caret"></i></button>
                <button class="split"><svg class="ic"><use href="#open"/></svg><i class="caret"></i></button>
                <button class="split"><svg class="ic"><use href="#save"/></svg><i class="caret"></i></button>
                <button class="split"><svg class="ic"><use href="#print"/></svg><i class="caret"></i></button>
                <button class="split"><svg class="ic"><use href="#undo"/></svg><i class="caret"></i></button>
                <button class="split pressed"><svg class="ic"><use href="#cursor"/></svg><i class="caret"></i></button>
                <button class="solo"><svg class="ic"><use href="#light"/></svg></button>
                <button class="solo"><svg class="ic"><use href="#list"/></svg></button>
                <button class="split"><svg class="ic"><use href="#gear"/></svg><i class="caret"></i></button>
            </div>
            <span class="doc">Sketch6 of 259ET0991-S_P...</span>
            <div class="search">
                <svg class="ic"><use href="#prompt"/></svg>
                <input type="text" value="=" aria-label="Search commands">
                <svg class="ic"><use href="#glass"/></svg>
                <i class="caret dark"></i>
            </div>
            <div class="winbtns">
                <button aria-label="User"><svg class="ic"><use href="#user"/></svg></button>
                <button aria-label="Help"><svg class="ic"><use href="#help"/></svg></button>
                <button aria-label="Minimize"><svg class="ic"><use href="#min"/></svg></button>
                <button aria-label="Span displays"><svg class="ic"><use href="#span"/></svg></button>
                <button aria-label="Restore"><svg class="ic"><use href="#restore"/></svg></button>
                <button aria-label="Close"><svg class="ic"><use href="#close"/></svg></button>
            </div>
        </header>

        <div class="toolbar">
            <div class="bar">
                <button><svg class="ic"><use href="#dim"/></svg></button><i class="caret"></i>
                <button class="off"><svg class="ic"><use href="#dim"/></svg></button><hr>
                <button><svg class="ic"><use href="#spell"/></svg></button>
                <button><svg class="ic"><use href="#brush"/></svg></button><hr>
                <button><svg class="ic"><use href="#letter"/></svg></button>
                <button class="off"><svg class="ic"><use href="#letters"/></svg></button><i class="caret off"></i>
                <button><svg class="ic"><use href="#balloon"/></svg></button>
                <button class="off"><svg class="ic"><use href="#balloon"/></svg></button>
                <button><svg class="ic"><use href="#surf"/></svg></button>
                <button><svg class="ic"><use href="#weld"/></svg></button>
                <button><svg class="ic"><use href="#gtol"/></svg></button>
                <button><svg class="ic"><use href="#datum"/></svg></button>
                <button><svg class="ic"><use href="#dtarget"/></svg></button>
                <button class="off"><svg class="ic"><use href="#hole"/></svg></button>
                <button class="off"><svg class="ic"><use href="#tri"/></svg></button>
                <button><svg class="ic"><use href="#hatch"/></svg></button>
                <button><svg class="ic"><use href="#block"/></svg></button><i class="caret"></i>
                <button class="off"><svg class="ic"><use href="#target"/></svg></button>
                <button class="off"><svg class="ic"><use href="#cline"/></svg></button>
                <button class="off"><svg class="ic"><use href="#table"/></svg></button><i class="caret off"></i>
            </div>
            <div class="bar">
                <button class="off"><svg class="ic"><use href="#flagd"/></svg></button>
                <button class="off"><svg class="ic"><use href="#sizebox"/></svg></button>
                <button class="off"><svg class="ic"><use href="#sizehole"/></svg></button>
                <button class="off"><svg class="ic"><use href="#between"/></svg></button>
                <button class="off"><svg class="ic"><use href="#datum"/></svg></button>
                <button class="off"><svg class="ic"><use href="#gtol"/></svg></button>
                <button class="off"><svg class="ic"><use href="#dots"/></svg></button><hr>
                <button class="off"><svg class="ic"><use href="#plusm"/></svg></button>
                <button class="off"><svg class="ic"><use href="#hi"/></svg></button>
            </div>
        </div>

        <div class="ribbon">
            <button class="big exit"><svg class="ic"><use href="#exit"/></svg><span>Exit ...</span><i class="caret"></i></button>
            <button class="big smart"><svg class="ic"><use href="#dim"/></svg><span>Smart Dimension</span><i class="caret"></i></button>
            <div class="grid">
                <button><svg class="ic"><use href="#line"/></svg><i class="caret"></i></button>
                <button><svg class="ic"><use href="#circle"/></svg><i class="caret"></i></button>
                <button><svg class="ic"><use href="#spline"/></svg><i class="caret"></i></button>
                <button class="off"><svg class="ic"><use href="#net"/></svg></button>
                <button><svg class="ic"><use href="#rect"/></svg><i class="caret"></i></button>
                <button><svg class="ic"><use href="#arc"/></svg><i class="caret"></i></button>
                <button><svg class="ic"><use href="#ellipse"/></svg><i class="caret"></i></button>
                <button><svg class="ic"><use href="#text"/></svg></button>
                <button><svg class="ic"><use href="#slot"/></svg><i class="caret"></i></button>
                <button><svg class="ic"><use href="#poly"/></svg></button>
                <button><svg class="ic"><use href="#fillet"/></svg><i class="caret"></i></button>
                <button><svg class="ic"><use href="#point"/></svg></button>
            </div>
            <button class="big trim"><svg class="ic"><use href="#trim"/></svg><span><u>T</u>rim Entities</span><i class="caret"></i></button>
            <button class="big convert"><svg class="ic"><use href="#convert"/></svg><span>Convert Entities</span><i class="caret"></i></button>
            <button class="big two offset"><svg class="ic"><use href="#offset"/></svg><span>Offset Entities</span></button>
            <button class="big two surface"><svg class="ic off"><use href="#offsurf"/></svg><span>Offset On Surface</span></button>
            <div class="rows">
                <button><svg class="ic"><use href="#mirror"/></svg>Mirror Entities</button>
                <button><svg class="ic"><use href="#pattern"/></svg>Linear Sketch Pattern<i class="caret"></i></button>
                <button><svg class="ic"><use href="#move"/></svg>Move Entities<i class="caret"></i></button>
            </div>
            <button class="big relations"><svg class="ic"><use href="#relations"/></svg><span>Display/Delete Relations</span><i class="caret"></i></button>
            <button class="big two repair"><svg class="ic"><use href="#repair"/></svg><span>Repair Sketch</span></button>
            <button class="big quicksnap"><svg class="ic"><use href="#snap"/></svg><span>Qui...</span><i class="caret"></i></button>
            <button class="big two rapid"><svg class="ic"><use href="#rapid"/></svg><span>Rapid Sketch</span></button>
            <button class="big two on instant"><svg class="ic"><use href="#instant"/></svg><span>Instant2D</span></button>
            <button class="big two on shaded"><svg class="ic"><use href="#shaded"/></svg><span>Shaded Sketch Contours</span></button>
        </div>

        <div class="middle">
            <div class="workspace">
                <div class="tabrow">
                    <nav class="tabs">
                        <button>Features</button><button class="active">Sketch</button><button>Sketch Ink</button><button>Surfaces</button><button>Sheet Metal</button><button>Weldments</button><button>Markup</button><button>Evaluate</button><button>MBD Dimensions</button><button>SOLIDWORKS Add-Ins</button>
                    </nav>
                    <div class="mdi">
                        <button><svg class="ic"><use href="#dockl"/></svg></button>
                        <button><svg class="ic"><use href="#dockr"/></svg></button>
                        <button><svg class="ic" viewBox="0 0 20 20"><path d="M5 15h10" stroke="currentColor" stroke-width="1.500"/></svg></button>
                        <button><svg class="ic"><use href="#restore"/></svg></button>
                        <button><svg class="ic"><use href="#close"/></svg></button>
                    </div>
                </div>

                <div class="split-view">
                    <aside class="panel">
                        <div class="grab"><i class="knob"></i></div>
                        <div class="ptabs">
                            <button class="active" aria-label="FeatureManager"><svg class="ic"><use href="#part"/></svg></button>
                            <button aria-label="PropertyManager"><svg class="ic"><use href="#props"/></svg></button>
                            <button aria-label="ConfigurationManager"><svg class="ic"><use href="#cfg"/></svg></button>
                            <button aria-label="DimXpertManager"><svg class="ic"><use href="#target"/></svg></button>
                            <button aria-label="DisplayManager"><svg class="ic"><use href="#ball2"/></svg></button>
                        </div>
                        <label class="filter"><svg class="ic"><use href="#funnel"/></svg><input type="text" aria-label="Filter tree"></label>
                        <ul class="tree">
                            <li><svg class="ic root"><use href="#part"/></svg><svg class="ic"><use href="#cap"/></svg>259ET0991-S_P-CRANKSHAFT--P</li>
                            <li><i class="twist"></i><svg class="ic"><use href="#history"/></svg>History</li>
                            <li><i></i><svg class="ic"><use href="#sensor"/></svg>Sensors</li>
                            <li><i class="twist"></i><svg class="ic"><use href="#anno"/></svg>Annotations</li>
                            <li><i class="twist"></i><svg class="ic"><use href="#bodies"/></svg>Solid Bodies(1)</li>
                            <li><i></i><svg class="ic"><use href="#eq"/></svg>Equations</li>
                            <li><i></i><svg class="ic"><use href="#material"/></svg>Material &lt;not specified&gt;</li>
                            <li><i></i><svg class="ic"><use href="#plane"/></svg>Front Plane</li>
                            <li><i></i><svg class="ic"><use href="#plane"/></svg>Top Plane</li>
                            <li><i></i><svg class="ic"><use href="#plane"/></svg>Right Plane</li>
                            <li><i></i><svg class="ic"><use href="#origin"/></svg>Origin</li>
                            <li><i class="twist"></i><svg class="ic"><use href="#extrude"/></svg>Boss-Extrude1</li>
                            <li><i class="twist"></i><svg class="ic"><use href="#extrude"/></svg>Boss-Extrude2</li>
                            <li><i class="twist"></i><svg class="ic"><use href="#extrude"/></svg>Boss-Extrude6</li>
                            <li><i class="twist"></i><svg class="ic"><use href="#extrude"/></svg>Boss-Extrude7</li>
                            <li><i></i><svg class="ic"><use href="#mirrorf"/></svg>Mirror2</li>
                            <li><i class="twist"></i><svg class="ic"><use href="#extrude"/></svg>Boss-Extrude8</li>
                            <li><i class="twist"></i><svg class="ic"><use href="#extrude"/></svg>Boss-Extrude9</li>
                            <li class="dim"><i class="twist down"></i><svg class="ic off"><use href="#extrude"/></svg>Boss-Extrude10</li>
                            <li class="child"><svg class="ic"><use href="#sketch"/></svg>Sketch6</li>
                        </ul>
                        <div class="hscroll">
                            <button aria-label="Scroll left"><svg class="chev" viewBox="0 0 10 10"><path d="M7 1L3 5l4 4"/></svg></button>
                            <div class="track"><div class="thumb"></div></div>
                            <button aria-label="Scroll right"><svg class="chev" viewBox="0 0 10 10"><path d="M3 1l4 4-4 4"/></svg></button>
                        </div>
                        <div class="handle"><i class="knob"></i></div>
                    </aside>

                    <main class="viewport">
                        <svg class="model" viewBox="276 186 1606 769">
                            <defs>
                                <linearGradient id="steel" x1="0" y1="0" x2="0" y2="1"><stop offset="0" stop-color="#86817d"/><stop offset=".6" stop-color="#8a8480"/><stop offset="1" stop-color="#97918d"/></linearGradient>
                                <linearGradient id="darkUp" gradientUnits="userSpaceOnUse" x1="785" y1="640" x2="885" y2="600"><stop offset="0" stop-color="#4b4845"/><stop offset="1" stop-color="#0b0a09"/></linearGradient>
                                <linearGradient id="darkLow" gradientUnits="userSpaceOnUse" x1="885" y1="790" x2="1010" y2="850"><stop offset="0" stop-color="#454240"/><stop offset="1" stop-color="#1e1d1c"/></linearGradient>
                                <linearGradient id="web" x1="0" y1="0" x2="0" y2="1"><stop offset="0" stop-color="#161614"/><stop offset="1" stop-color="#060606"/></linearGradient>
                                <path id="rear" clip-rule="evenodd" fill-rule="evenodd" d="M833 554L791 612Q784 622 780 629C769 650 769 680 780 705A333 333 0 0 0 1374 705C1385 680 1385 650 1374 629Q1370 622 1363 612L1321 554ZM815 680A289 289 0 0 0 1339 680A27 27 0 0 0 1289 656A234 234 0 0 1 865 656A27 27 0 0 0 815 680Z"/>
                                <clipPath id="rearClip"><use href="#rear"/></clipPath>
                                <g id="shade"><path d="M770 540V620L784 637L811 668L860 745H1077V540Z" fill="url(#darkUp)"/><path d="M858 742L867 760L916 850L935 900H1078V742Z" fill="url(#darkLow)"/></g>
                            </defs>
                            <use href="#rear" fill="#7d7874"/>
                            <g clip-path="url(#rearClip)">
                                <use href="#shade"/>
                                <use href="#shade" transform="translate(2154) scale(-1 1)"/>
                            </g>
                            <use href="#rear" fill="none" stroke="#0b0b0a" stroke-width="1.500"/>
                            <path d="M966 286Q1077 248 1188 286L1216 366Q1077 285 938 366Z" fill="url(#web)" stroke="#000" stroke-width="1.500"/>
                            <path fill="url(#steel)" fill-rule="evenodd" stroke="#0b0b0a" stroke-width="1.500" d="M1077 223A333 333 0 0 0 780 407C769 432 769 462 780 483Q784 490 791 500L833 558Q900 660 938 744Q958 790 970 827C978 850 997 870 1022 880Q1048 889 1077 889Q1106 889 1132 880C1157 870 1176 850 1184 827Q1196 790 1216 744Q1254 660 1321 558L1363 500Q1370 490 1374 483C1385 462 1385 432 1374 407A333 333 0 0 0 1077 223ZM815 432A289 289 0 0 1 1339 432A27 27 0 0 1 1289 456A234 234 0 0 0 865 456A27 27 0 0 1 815 432Z"/>
                            <!-- sketch circle and its dimension -->
                            <circle cx="1077" cy="737" r="115" fill="#898758" stroke="#fff" stroke-width="2.500"/>
                            <path d="M1073 737h9M1077 733v9" stroke="#fff"/>
                            <path d="M1178 796L1326 881H1348" fill="none" stroke="#fff" stroke-width="1.500"/>
                            <path d="M1176 794l13 4-4 6z" fill="#fff"/>
                            <text class="dimtext" x="1358" y="889">Ø1.250</text>
                            <!-- origin -->
                            <path d="M1077 522V556H1090" fill="none" stroke="#f00" stroke-width="1.500"/>
                            <path d="M1077 515l4 12h-8zM1098 556l-12 4v-8z" fill="#f00"/>
                            <!-- triad -->
                            <path d="M326 887H300" stroke="#0000b8" stroke-width="4"/><path d="M289 888l12-5v10z" fill="#0000c8"/>
                            <circle cx="326" cy="887" r="4" fill="#c00000"/>
                            <path d="M326 885V860" stroke="#3cf53c" stroke-width="4"/><path d="M326 850l5 12h-10z" fill="#12d512"/>
                            <text class="axis" x="323" y="844" fill="#10b010">Y</text>
                            <text class="axis" x="279" y="888" fill="#0000d8">Z</text>
                        </svg>

                        <div class="hud">
                            <button><svg class="ic"><use href="#zoomfit"/></svg></button>
                            <button><svg class="ic"><use href="#zoomarea"/></svg></button>
                            <button><svg class="ic"><use href="#prev"/></svg></button>
                            <button><svg class="ic"><use href="#section"/></svg></button>
                            <button><svg class="ic"><use href="#pan"/></svg></button>
                            <button><svg class="ic"><use href="#rotate"/></svg></button>
                            <button><svg class="ic"><use href="#normal"/></svg></button>
                            <button><svg class="ic"><use href="#cube"/></svg></button>
                            <button><svg class="ic"><use href="#cubew"/></svg></button>
                            <button><svg class="ic"><use href="#cubef"/></svg></button>
                            <button><svg class="ic"><use href="#cubex"/></svg></button><i class="caret"></i>
                            <button><svg class="ic"><use href="#display"/></svg></button><i class="caret"></i>
                            <button><svg class="ic"><use href="#eye"/></svg></button><i class="caret"></i>
                            <button class="off"><svg class="ic"><use href="#ballpen"/></svg></button>
                            <button><svg class="ic"><use href="#scene"/></svg></button><i class="caret"></i>
                            <button><svg class="ic"><use href="#monitor"/></svg></button><i class="caret"></i>
                        </div>

                        <div class="confirm">
                            <button aria-label="Exit sketch"><svg viewBox="0 0 50 42"><path d="M26 4H4v16q0 10 10 10h12" fill="none" stroke="#2c669c" stroke-width="5"/><path d="M26 4H4v16q0 10 10 10h12" fill="none" stroke="#1c5088" stroke-width="3"/><path d="M24 29l12-11v7q8 0 6-9h5q2 18-11 18v5z" fill="#1b5288" stroke="#3572a6" stroke-width="1.500"/></svg></button>
                            <button class="cancel" aria-label="Cancel sketch"><svg viewBox="0 0 24 24"><path d="M3 3l18 18M21 3L3 21" stroke="#4c3d6a" stroke-width="6"/></svg></button>
                        </div>

                        <nav class="taskpane">
                            <button aria-label="Home"><svg class="ic"><use href="#home"/></svg></button>
                            <button aria-label="Design library"><svg class="ic"><use href="#books"/></svg></button>
                            <button aria-label="File explorer"><svg class="ic"><use href="#dir"/></svg></button>
                            <button aria-label="View palette"><svg class="ic"><use href="#palette"/></svg></button>
                            <button class="active" aria-label="Appearances"><svg class="ic"><use href="#ball"/></svg></button>
                            <button aria-label="Custom properties"><svg class="ic"><use href="#props"/></svg></button>
                            <button aria-label="Forum"><svg class="ic"><use href="#forum"/></svg></button>
                        </nav>
                    </main>
                </div>
            </div>

            <div class="render">
                <button class="off"><svg class="ic"><use href="#ballpen"/></svg></button>
                <button class="off"><svg class="ic"><use href="#ballsarrow"/></svg></button>
                <button class="off"><svg class="ic"><use href="#paste"/></svg></button>
                <button class="off"><svg class="ic"><use href="#ballpen"/></svg></button>
                <button class="off"><svg class="ic"><use href="#barrel"/></svg></button>
                <button><svg class="ic"><use href="#globe"/></svg></button>
                <button class="off"><svg class="ic"><use href="#camera"/></svg></button>
                <button class="off"><svg class="ic"><use href="#ballgear"/></svg></button>
                <button class="off"><svg class="ic"><use href="#ballplain"/></svg></button>
                <button class="off"><svg class="ic"><use href="#film"/></svg></button>
                <button class="off"><svg class="ic"><use href="#balls"/></svg></button>
                <button class="off"><svg class="ic"><use href="#ballgear"/></svg></button>
                <button class="off"><svg class="ic"><use href="#ballgear"/></svg></button>
                <button class="off"><svg class="ic"><use href="#ballsarrow"/></svg></button>
            </div>
        </div>

        <div class="doctabs">
            <div class="stub"></div>
            <div class="steps">
                <button aria-label="First"><svg viewBox="0 0 12 12"><path d="M2 1v10M10 1v10L4 6z"/></svg></button>
                <button aria-label="Previous"><svg viewBox="0 0 12 12"><path d="M9 1v10L3 6z"/></svg></button>
                <button aria-label="Next"><svg viewBox="0 0 12 12"><path d="M3 1v10l6-5z"/></svg></button>
                <button aria-label="Last"><svg viewBox="0 0 12 12"><path d="M2 1v10l6-5zM10 1v10"/></svg></button>
            </div>
            <button class="tab active">Model</button>
            <button class="tab motion">Motion Study 1</button>
        </div>

        <div class="toolbar lower">
            <div class="bar">
                <button class="off"><svg class="ic"><use href="#layers"/></svg></button>
                <button class="off"><svg class="ic"><use href="#stack"/></svg></button>
                <button class="off"><svg class="ic"><use href="#paint"/></svg></button>
                <button class="off"><svg class="ic"><use href="#lines"/></svg></button>
                <button class="off"><svg class="ic"><use href="#dash"/></svg></button>
                <button class="off"><svg class="ic"><use href="#swap"/></svg></button>
                <button><svg class="ic"><use href="#ruler"/></svg></button>
            </div>
        </div>

        <footer class="status">
            <span class="edition">SOLIDWORKS Student Edition - Academic Use Only</span>
            <span class="x">-3.220in</span>
            <span class="yz">-0.853in 0.000in</span>
            <span class="state">Fully Defined</span>
            <span class="editing">Editing Sketch6</span>
            <span class="units">IPS</span>
            <i class="caret up"></i>
            <svg class="ic sm"><use href="#tag"/></svg>
        </footer>
    </div>
</body>

</html>
```
FILE: styles.css
```css
* {
    box-sizing: border-box;
}

body {
    margin: 0;
    font-family: "Noto Sans", "Open Sans", sans-serif;
    font-size: 14px;
    line-height: 19px;
    color: #e8e8e8;
}

button {
    display: flex;
    align-items: center;
    justify-content: center;
    padding: 0;
    border: none;
    background: none;
    color: inherit;
    font: inherit;
}

input {
    border: none;
    background: none;
    font: inherit;
    outline: none;
    min-width: 0;
}

.sprite {
    display: none;
}

.ic {
    display: block;
    width: 20px;
    height: 20px;
    flex: none;
}

.sm {
    width: 16px;
    height: 16px;
}

.off {
    opacity: 0.35;
    filter: grayscale(1);
}

.caret {
    width: 6px;
    height: 4px;
    flex: none;
    background: #f2f2f2;
    clip-path: polygon(0 0, 100% 0, 50% 100%);
}

.caret.dark {
    width: 8px;
    height: 5px;
    background: #777;
}

.caret.up {
    clip-path: polygon(0 100%, 100% 100%, 50% 0);
}

.app {
    display: flex;
    flex-direction: column;
    height: 100vh;
    border: 4px solid #0c26ff;
    background: #4a4a4a;
    overflow: hidden;
}

/* title bar */
.titlebar {
    display: flex;
    align-items: center;
    height: 41px;
    flex: none;
    border-top: 1px solid #777;
    border-bottom: 1px solid #868686;
}

.logo {
    display: flex;
    align-items: center;
    gap: 5px;
    width: 137px;
    padding-left: 5px;
    font-family: "Open Sans", sans-serif;
    font-size: 13px;
    font-style: italic;
    color: #fff;
}

.logo b {
    font-weight: 800;
}

.ds {
    width: 20px;
    height: 20px;
}

.menu {
    display: flex;
    font-size: 13px;
}

.menu button {
    padding: 2px 8px 0;
}

.pin {
    align-self: stretch;
    width: 28px;
    border-right: 1px solid #868686;
}

.quick {
    display: flex;
    align-items: center;
    padding-left: 18px;
}

.solo {
    width: 33px;
    height: 33px;
}

.split {
    width: 47px;
    height: 33px;
    gap: 8px;
    padding-left: 3px;
}

.pressed {
    background: linear-gradient(90deg, #2a2a2a 32px, #4a4a4a 32px);
    border: 1px solid #0d0d0d;
}

.doc {
    margin-left: auto;
    font-size: 13px;
    color: #c4c4c4;
}

.search {
    display: flex;
    align-items: center;
    width: 250px;
    height: 29px;
    margin-left: 8px;
    padding: 0 4px 0 5px;
    gap: 8px;
    background: #fff;
}

.search input {
    flex: 1;
    color: #333;
}

.winbtns {
    display: flex;
    justify-content: space-between;
    width: 246px;
    padding: 0 8px 0 15px;
}

/* icon toolbars */
.toolbar {
    display: flex;
    height: 32px;
    flex: none;
    border-bottom: 1px solid #868686;
}

.bar {
    display: flex;
    align-items: center;
    padding: 0 7px 2px 13px;
    border-right: 1px solid #7d7d7d;
    background: repeating-linear-gradient(#ccc 0 2px, transparent 2px 4px) 3px 2px / 2px 27px no-repeat;
}

.bar button {
    width: 27px;
    height: 28px;
}

.bar .caret {
    margin: 0 6px 0 7px;
}

.bar hr {
    width: 2px;
    height: 22px;
    margin: 0 3px 0 2px;
    border: none;
    border-left: 1px solid #2c2c2c;
    border-right: 1px solid #777;
}

/* ribbon */
.ribbon {
    display: flex;
    height: 81px;
    flex: none;
    padding: 1px 0 1px 6px;
    border-bottom: 1px solid #868686;
    font-size: 13px;
}

.big {
    flex: none;
    flex-direction: column;
    justify-content: flex-start;
    padding-top: 4px;
    gap: 1px;
    white-space: nowrap;
}

.big .caret {
    margin-top: 20px;
}

.big.two {
    padding-top: 10px;
    white-space: normal;
}

.exit {
    width: 50px;
    background: linear-gradient(#2a2a2a 58px, #4a4a4a 58px);
    border: 1px solid #111;
}

.smart {
    width: 117px;
    border-right: 2px solid #707070;
}

.grid {
    display: grid;
    grid-template-columns: 40px 40px 40px 20px;
    align-content: space-between;
    padding: 1px 3px 3px;
    border-right: 2px solid #707070;
}

.grid button {
    height: 22px;
    justify-content: flex-start;
    gap: 6px;
}

.trim {
    width: 84px;
}

.convert {
    width: 106px;
}

.offset {
    width: 54px;
}

.surface {
    width: 68px;
}

.surface span {
    color: #858585;
}

.rows {
    display: flex;
    flex-direction: column;
    justify-content: space-between;
    width: 199px;
    padding: 1px 6px 3px 4px;
    border-right: 2px solid #707070;
}

.rows button {
    height: 22px;
    justify-content: flex-start;
    gap: 6px;
}

.rows .caret {
    margin-left: auto;
}

.relations {
    width: 156px;
}

.repair {
    width: 54px;
    border-right: 2px solid #707070;
}

.quicksnap {
    width: 48px;
    border-right: 2px solid #707070;
}

.rapid {
    width: 51px;
}

.on {
    background: #2a2a2a;
    border: 1px solid #0a0a0a;
}

.instant {
    width: 71px;
}

.shaded {
    width: 98px;
}

/* workspace */
.middle {
    display: flex;
    flex: 1;
    min-height: 0;
}

.workspace {
    display: flex;
    flex-direction: column;
    flex: 1;
    min-width: 0;
    background: linear-gradient(#184680, #123349 50%, #0a1f0d);
    border-right: 1px solid #8a9a9c;
}

.tabrow {
    display: flex;
    justify-content: space-between;
    height: 28px;
    flex: none;
}

.tabs {
    display: flex;
    border-bottom: 1px solid #868686;
    background: #333;
}

.tabs button {
    padding: 0 10px 0 9px;
    border-right: 1px solid #868686;
    white-space: nowrap;
}

.tabs .active {
    background: #4a4a4a;
    font-weight: 700;
    color: #fff;
}

.mdi {
    display: flex;
    align-items: center;
    padding: 4px 5px 0 0;
    color: #3a4c6a;
}

.mdi button {
    width: 26px;
}

.split-view {
    display: flex;
    flex: 1;
    min-height: 0;
}

.panel {
    position: relative;
    display: flex;
    flex-direction: column;
    width: 272px;
    flex: none;
    background: #4a4a4a;
    border-right: 1px solid #868686;
    border-top: 1px solid #9ab0b4;
}

.grab {
    display: flex;
    align-items: center;
    justify-content: center;
    height: 22px;
    margin-top: 2px;
    border-top: 1px solid #868686;
    border-bottom: 1px solid #868686;
}

.knob {
    width: 8px;
    height: 8px;
    border-radius: 50%;
    background: radial-gradient(#eee, #999);
}

.ptabs {
    display: flex;
    height: 26px;
    margin: 4px 0 0 2px;
    border-bottom: 1px solid #868686;
}

.ptabs button {
    width: 40px;
    background: #303030;
    border-top: 1px solid #868686;
    border-right: 1px solid #868686;
}

.ptabs .active {
    height: 26px;
    background: #4a4a4a;
}

.filter {
    display: flex;
    align-items: center;
    height: 31px;
    margin: 0 4px 0 5px;
    padding-left: 1px;
    border: 1px solid #868686;
    background: #575757;
}

.filter input {
    flex: 1;
    color: #fff;
}

.tree {
    flex: 1;
    margin: 0 2px 0 0;
    padding: 0;
    list-style: none;
    overflow: hidden;
}

.tree li {
    display: flex;
    align-items: center;
    height: 24px;
    gap: 4px;
    padding-left: 8px;
    white-space: nowrap;
}

.tree li > i {
    width: 14px;
    height: 8px;
    flex: none;
}

.tree .root {
    margin-left: -5px;
    margin-right: -1px;
}

.twist {
    background: #f0f0f0;
    clip-path: polygon(2px 0, 7px 4px, 2px 8px);
}

.twist.down {
    clip-path: polygon(0 2px, 8px 2px, 4px 6px);
}

.tree .dim {
    color: #808080;
}

.tree .child {
    padding-left: 48px;
    border-bottom: 3px solid #bcb8dc;
    height: 26px;
}

.hscroll {
    display: flex;
    height: 21px;
    margin: 0 2px 5px 0;
    background: #f0f0f0;
}

.hscroll button {
    width: 21px;
}

.chev {
    width: 12px;
    height: 12px;
    fill: none;
    stroke: #444;
    stroke-width: 2;
}

.track {
    flex: 1;
    padding: 1px 0;
}

.thumb {
    width: 53%;
    height: 100%;
    background: #cdcdcd;
}

.handle {
    position: absolute;
    left: 100%;
    top: 345px;
    display: flex;
    align-items: center;
    width: 12px;
    height: 49px;
    background: #4a4a4a;
    border: 1px solid #868686;
    border-left: none;
}

.viewport {
    position: relative;
    flex: 1;
    min-width: 0;
}

.model {
    display: block;
    width: 100%;
    height: 100%;
}

.dimtext {
    font-size: 20px;
    font-weight: 300;
    fill: #fff;
}

.axis {
    font-size: 10px;
}

.hud {
    position: absolute;
    top: 2px;
    left: 0;
    right: 5px;
    display: flex;
    align-items: center;
    justify-content: center;
    height: 26px;
}

.hud button {
    width: 26px;
}

.hud .caret {
    margin: 0 4px;
    background: #6d7f98;
}

.confirm {
    position: absolute;
    top: 31px;
    right: 40px;
    display: flex;
    align-items: flex-end;
}

.confirm svg {
    width: 50px;
    height: 42px;
}

.confirm .cancel svg {
    width: 22px;
    height: 22px;
}

.confirm .cancel {
    margin-bottom: -16px;
}

.taskpane {
    position: absolute;
    top: 54px;
    right: 0;
    width: 33px;
    border: 1px solid #868686;
    background: #303030;
}

.taskpane button {
    width: 100%;
    height: 30px;
    border-bottom: 1px solid #868686;
}

.taskpane button:last-child {
    border-bottom: none;
}

.taskpane .active {
    background: #bcbcbc;
}

.render {
    display: flex;
    flex-direction: column;
    align-items: center;
    align-self: flex-start;
    width: 33px;
    padding: 13px 0 6px 2px;
    border-bottom: 1px solid #868686;
    background: repeating-linear-gradient(90deg, #ccc 0 2px, transparent 2px 4px) 4px 2px / 27px 2px no-repeat;
}

.render button {
    height: 26px;
}

/* bottom bars */
.doctabs {
    display: flex;
    height: 21px;
    flex: none;
    margin-right: 33px;
    border-top: 1px solid #6f6f6f;
    border-right: 1px solid #8a9a9c;
}

.stub {
    width: 27px;
    background: #b4b4b4;
}

.steps {
    display: flex;
}

.steps button {
    width: 20px;
    background: #a9a9bf;
    border: 1px solid #8585a0;
}

.steps svg {
    width: 11px;
    height: 11px;
    fill: #77779a;
    stroke: #77779a;
}

.tab {
    width: 143px;
    padding: 0 10px 2px 0;
    background: #333;
    border-right: 1px solid #868686;
}

.tab.active {
    width: 76px;
    padding: 0 0 2px 4px;
    background: none;
    font-size: 15px;
    font-weight: 700;
    color: #fff;
}

.lower {
    height: 33px;
    padding-top: 1px;
}

.status {
    display: flex;
    align-items: center;
    height: 21px;
    flex: none;
    padding: 1px 3px 0 1px;
}

.edition {
    margin-right: auto;
}

.x {
    width: 81px;
}

.yz {
    width: 125px;
}

.state {
    width: 105px;
}

.editing {
    width: 238px;
}

.units {
    width: 56px;
}

.status .sm {
    margin-left: 27px;
}
```
